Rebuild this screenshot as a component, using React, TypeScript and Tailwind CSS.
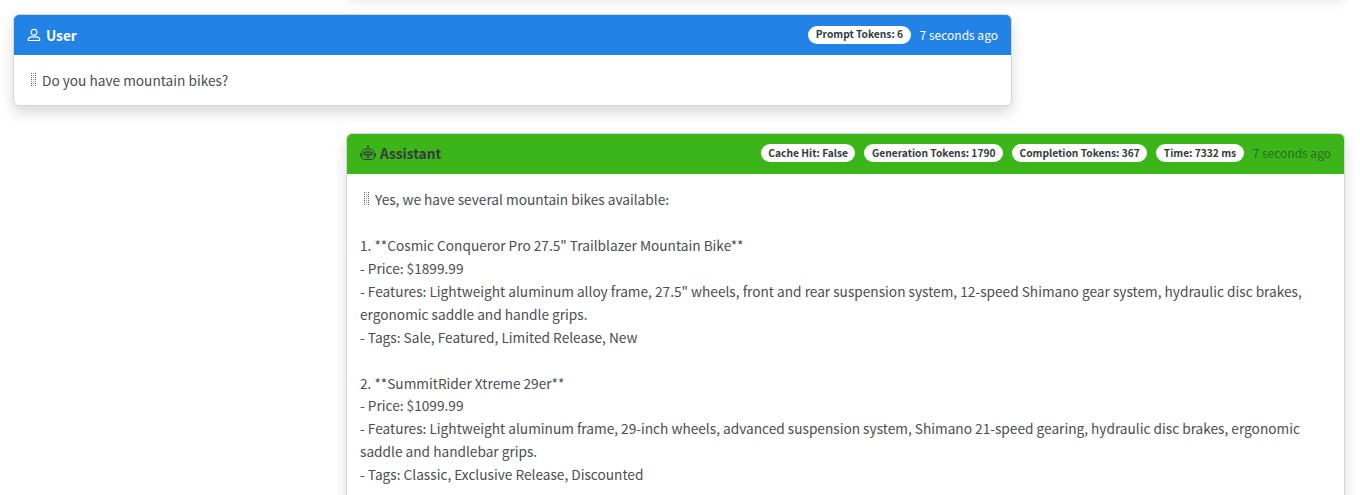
import type { ReactNode } from "react";

function Grip() {
  return (
    <svg className="mt-[4px] h-[14px] w-[6px] shrink-0" viewBox="0 0 6 14">
      {[0, 1, 2, 3, 4, 5, 6].map((r) => (
        <g key={r}>
          <rect x="0" y={r * 2} width="1" height="1" fill="#63666f" />
          <rect x="2" y={r * 2} width="1" height="1" fill="#a9abb2" />
          <rect x="4" y={r * 2} width="1" height="1" fill="#63666f" />
        </g>
      ))}
    </svg>
  );
}

function PersonIcon() {
  return (
    <svg className="h-[14px] w-[14px]" viewBox="0 0 14 14" fill="none" stroke="currentColor" strokeWidth="1.15">
      <circle cx="7" cy="4.200" r="2.900" />
      <path d="M1.200 12.500c0-2.200 1.400-3.600 3.800-3.600h4c2.400 0 3.800 1.400 3.800 3.600z" strokeLinejoin="round" />
    </svg>
  );
}

function RobotIcon() {
  return (
    <svg className="size-[16px]" viewBox="0 0 16 16" fill="none" stroke="currentColor" strokeWidth="1">
      <path d="M8 1v3M7 1.2h2" />
      <path d="M1.700 8.500C1.700 5.400 4.300 4 8 4s6.300 1.400 6.300 4.500v3.300c0 1.700-1 2.700-2.800 2.700h-7c-1.800 0-2.800-1-2.800-2.700z" />
      <path d="M.7 8.300v3.400M15.300 8.300v3.400" />
      <rect x="3.600" y="6.800" width="8.800" height="3.600" rx="1.800" fill="currentColor" fillOpacity="0.65" />
      <path d="M5.300 8.600h1.400M9.300 8.600h1.400" stroke="#3cb51a" />
      <path d="M6 12.500h4" />
    </svg>
  );
}

function Pill({ children }: { children: ReactNode }) {
  return (
    <span className="flex h-[18px] items-center rounded-full bg-white px-[7.5px] text-[10.23px] font-bold leading-[18px] text-[#373a3c]">
      <span className="-mt-[1px]">{children}</span>
    </span>
  );
}

const answer = [
  "",
  '1. **Cosmic Conqueror Pro 27.5" Trailblazer Mountain Bike**',
  "- Price: $1899.99",
  '- Features: Lightweight aluminum alloy frame, 27.5" wheels, front and rear suspension system, 12-speed Shimano gear system, hydraulic disc brakes,',
  "ergonomic saddle and handle grips.",
  "- Tags: Sale, Featured, Limited Release, New",
  "",
  "2. **SummitRider Xtreme 29er**",
  "- Price: $1099.99",
  "- Features: Lightweight aluminum frame, 29-inch wheels, advanced suspension system, Shimano 21-speed gearing, hydraulic disc brakes, ergonomic",
  "saddle and handlebar grips.",
  "- Tags: Classic, Exclusive Release, Discounted",
];

export default function App() {
  return (
    <div className="h-[495px] overflow-hidden bg-white font-['Noto_Sans_CJK_SC','Source_Sans_Pro',sans-serif] text-[13.68px] leading-[22.95px] text-[#4b4d50]">
      <div className="-mt-[40px] ml-[347px] h-[32px] w-[998px] rounded-md bg-white shadow-[0_7px_14px_rgba(0,0,0,0.15)]" />
      <section className="ml-[13px] mt-[22px] h-[92px] w-[999px] overflow-hidden rounded-[6px] border border-[#d5d5d5] bg-white shadow-[0_7px_14px_rgba(0,0,0,0.15)]">
        <header className="-mx-px -mt-px flex h-[41px] items-center justify-between bg-[#2282e6] px-[14px] pt-[1px] text-white">
          <div className="flex items-center gap-[5px] font-bold">
            <PersonIcon />
            <span>User</span>
          </div>
          <div className="flex items-center gap-[9px] text-[12px]">
            <Pill>Prompt Tokens: 6</Pill>
            <span>7 seconds ago</span>
          </div>
        </header>
        <div className="flex gap-[5px] pl-[17px] pt-[14px]">
          <Grip />
          <span>Do you have mountain bikes?</span>
        </div>
      </section>
      <section className="ml-[346px] mt-[27px] h-[440px] w-[999px] overflow-hidden rounded-[6px] border border-[#d5d5d5] bg-white shadow-[0_7px_14px_rgba(0,0,0,0.15)]">
        <header className="-mx-px -mt-px flex h-[41px] items-center justify-between bg-[#3cb51a] px-[14px] text-[#373a3c]">
          <div className="flex items-center gap-[4px] font-bold">
            <RobotIcon />
            <span>Assistant</span>
          </div>
          <div className="flex items-center gap-[9px] text-[12px]">
            <Pill>Cache Hit: False</Pill>
            <Pill>Generation Tokens: 1790</Pill>
            <Pill>Completion Tokens: 367</Pill>
            <Pill>Time: 7332 ms</Pill>
            <span className="text-[#2b6d25]">7 seconds ago</span>
          </div>
        </header>
        <div className="pl-[13px] pt-[14px]">
          <div className="flex gap-[5px] pl-[4px]">
            <Grip />
            <span>Yes, we have several mountain bikes available:</span>
          </div>
          {answer.map((line, i) => (
            <p key={i} className="h-[22.95px] whitespace-nowrap">
              {line}
            </p>
          ))}
        </div>
      </section>
    </div>
  );
}
